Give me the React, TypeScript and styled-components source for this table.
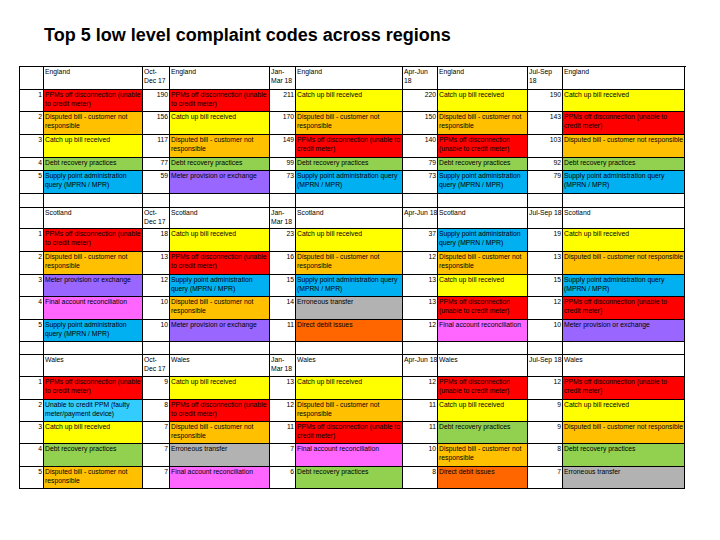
import React from 'react';
import styled, { createGlobalStyle } from 'styled-components';

const Global = createGlobalStyle`
  html, body { margin: 0; padding: 0; background: #ffffff; }
  body { font-family: "Liberation Sans", Arial, sans-serif; color: #000; }
`;

const COLS = '24px 99px 27px 100px 26px 107px 35px 90px 35px 122px';

const Page = styled.div`
  padding: 25px 0 0 19px;
  width: 701px;
`;

const Title = styled.h1`
  margin: 0 0 20px 25px;
  font-family: "Liberation Sans", Arial, sans-serif;
  font-weight: bold;
  font-size: 18px;
  line-height: 21px;
`;

const Sheet = styled.div`
  display: flex;
  flex-direction: column;
  width: 666px;
  border-top: 1px solid #000;
  border-left: 1px solid #000;
`;

const Row = styled.div<{ $h: number }>`
  display: grid;
  grid-template-columns: ${COLS};
  height: ${(p) => p.$h}px;
`;

const Cell = styled.div<{ $bg?: string; $right?: boolean; $nowrap?: boolean }>`
  box-sizing: border-box;
  border-right: 1px solid #000;
  border-bottom: 1px solid #000;
  background: ${(p) => p.$bg || '#ffffff'};
  padding: 1px ${(p) => (p.$right ? '1px' : '0')} 0 ${(p) => (p.$right ? '0' : '1px')};
  text-align: ${(p) => (p.$right ? 'right' : 'left')};
  white-space: ${(p) => (p.$nowrap ? 'nowrap' : 'normal')};
  font-family: "Liberation Sans", Arial, sans-serif;
  font-size: 6.8px;
  line-height: 8.5px;
  color: #000;
  overflow: visible;
  min-width: 0;
`;

type Code = 'P' | 'C' | 'D' | 'R' | 'S' | 'M' | 'F' | 'E' | 'DD' | 'U';

const LABEL: Record<Code, string> = {
  P: 'PPMs off disconnection (unable to credit meter)',
  C: 'Catch up bill received',
  D: 'Disputed bill - customer not responsible',
  R: 'Debt recovery practices',
  S: 'Supply point administration query (MPRN / MPR)',
  M: 'Meter provision or exchange',
  F: 'Final account reconciliation',
  E: 'Erroneous transfer',
  DD: 'Direct debit issues',
  U: 'Unable to credit PPM (faulty meter/payment device)',
};

const COLOR: Record<Code, string> = {
  P: '#FF0000',
  C: '#FFFF00',
  D: '#FFC000',
  R: '#92D050',
  S: '#00B0F0',
  M: '#9966FF',
  F: '#FF66FF',
  E: '#B2B2B2',
  DD: '#FF6600',
  U: '#33CCFF',
};

type Entry = [number, Code];
type RankRow = { first: Code; cols: Entry[] };
type Section = {
  region: string;
  periods: string[][];
  headerH: number;
  rowH: number[];
  spacerH?: number;
  rows: RankRow[];
};

const SECTIONS: Section[] = [
  {
    region: 'England',
    periods: [['Oct-', 'Dec 17'], ['Jan-', 'Mar 18'], ['Apr-Jun', '18'], ['Jul-Sep', '18']],
    headerH: 23,
    rowH: [22, 23, 23, 13, 23],
    spacerH: 14,
    rows: [
      { first: 'P', cols: [[190, 'P'], [211, 'C'], [220, 'C'], [190, 'C']] },
      { first: 'D', cols: [[156, 'C'], [170, 'D'], [150, 'D'], [143, 'P']] },
      { first: 'C', cols: [[117, 'D'], [149, 'P'], [140, 'P'], [103, 'D']] },
      { first: 'R', cols: [[77, 'R'], [99, 'R'], [79, 'R'], [92, 'R']] },
      { first: 'S', cols: [[59, 'M'], [73, 'S'], [73, 'S'], [79, 'S']] },
    ],
  },
  {
    region: 'Scotland',
    periods: [['Oct-', 'Dec 17'], ['Jan-', 'Mar 18'], ['Apr-Jun 18'], ['Jul-Sep 18']],
    headerH: 21,
    rowH: [23, 23, 22, 23, 22],
    spacerH: 13,
    rows: [
      { first: 'P', cols: [[18, 'C'], [23, 'C'], [37, 'S'], [19, 'C']] },
      { first: 'D', cols: [[13, 'P'], [16, 'D'], [12, 'D'], [13, 'D']] },
      { first: 'M', cols: [[12, 'S'], [15, 'S'], [13, 'C'], [15, 'S']] },
      { first: 'F', cols: [[10, 'D'], [14, 'E'], [13, 'P'], [12, 'P']] },
      { first: 'S', cols: [[10, 'M'], [11, 'DD'], [12, 'F'], [10, 'M']] },
    ],
  },
  {
    region: 'Wales',
    periods: [['Oct-', 'Dec 17'], ['Jan-', 'Mar 18'], ['Apr-Jun 18'], ['Jul-Sep 18']],
    headerH: 22,
    rowH: [23, 22, 22, 23, 22],
    rows: [
      { first: 'P', cols: [[9, 'C'], [13, 'C'], [12, 'P'], [12, 'P']] },
      { first: 'U', cols: [[8, 'P'], [12, 'D'], [11, 'C'], [9, 'C']] },
      { first: 'C', cols: [[7, 'D'], [11, 'P'], [11, 'R'], [9, 'D']] },
      { first: 'R', cols: [[7, 'E'], [7, 'F'], [10, 'D'], [8, 'R']] },
      { first: 'D', cols: [[7, 'F'], [6, 'R'], [8, 'DD'], [7, 'E']] },
    ],
  },
];

const Lines: React.FC<{ lines: string[] }> = ({ lines }) => (
  <>
    {lines.map((l, i) => (
      <React.Fragment key={i}>
        {i > 0 && <br />}
        {l}
      </React.Fragment>
    ))}
  </>
);

const SectionBlock: React.FC<{ s: Section }> = ({ s }) => (
  <>
    <Row $h={s.headerH}>
      <Cell />
      <Cell>{s.region}</Cell>
      {s.periods.map((p, i) => (
        <React.Fragment key={i}>
          <Cell $nowrap>
            <Lines lines={p} />
          </Cell>
          <Cell>{s.region}</Cell>
        </React.Fragment>
      ))}
    </Row>
    {s.rows.map((r, ri) => (
      <Row key={ri} $h={s.rowH[ri]}>
        <Cell $right>{ri + 1}</Cell>
        <Cell $bg={COLOR[r.first]}>{LABEL[r.first]}</Cell>
        {r.cols.map(([n, code], ci) => (
          <React.Fragment key={ci}>
            <Cell $right>{n}</Cell>
            <Cell $bg={COLOR[code]}>{LABEL[code]}</Cell>
          </React.Fragment>
        ))}
      </Row>
    ))}
    {s.spacerH ? (
      <Row $h={s.spacerH}>
        {Array.from({ length: 10 }).map((_, i) => (
          <Cell key={i} />
        ))}
      </Row>
    ) : null}
  </>
);

export default function App() {
  return (
    <Page>
      <Global />
      <Title>Top 5 low level complaint codes across regions</Title>
      <Sheet>
        {SECTIONS.map((s) => (
          <SectionBlock key={s.region} s={s} />
        ))}
      </Sheet>
    </Page>
  );
}
